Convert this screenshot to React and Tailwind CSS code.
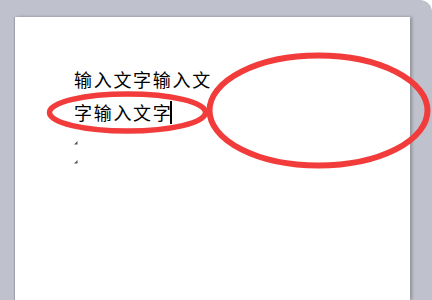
export default function App() {
  return (
    <div className="w-[432px] h-[300px] bg-white overflow-hidden">
      <div className="relative w-[432px] h-[300px] bg-[#bfc2cc] rounded-tr-[12px] pl-[15px] pt-[17px]">
        <div className="relative w-[395px] h-[283px] bg-white shadow-[2px_0_3px_rgba(0,0,0,0.25),-1px_0_1px_rgba(0,0,0,0.15)] pl-[59px] pt-[46px]">
          <div
            className="text-[18px] leading-[33px] tracking-[1.7px] text-black"
            style={{ fontFamily: '"Noto Sans CJK SC", sans-serif' }}
          >
            <div>输入文字输入文</div>
            <div className="flex items-center">
              <span>字输入文字</span>
              <span className="inline-block w-[2px] h-[23px] bg-black -ml-[3px]" />
            </div>
          </div>
          <div className="flex flex-col gap-[15px] mt-[12px]">
            <svg width="4" height="4" viewBox="0 0 4 4"><path d="M3.5 0 L3.5 3.5 L0 3.5 Z" fill="#555" /></svg>
            <svg width="4" height="4" viewBox="0 0 4 4"><path d="M3.5 0 L3.5 3.5 L0 3.5 Z" fill="#555" /></svg>
          </div>
        </div>
        <svg className="absolute left-0 top-0 pointer-events-none" width="432" height="300" viewBox="0 0 432 300">
          <ellipse cx="127.5" cy="112.5" rx="78" ry="18.5" fill="none" stroke="#f23c3c" strokeWidth="5.5" />
          <ellipse cx="318.5" cy="110.5" rx="109" ry="55" fill="none" stroke="#f23c3c" strokeWidth="6" />
        </svg>
      </div>
    </div>
  );
}
